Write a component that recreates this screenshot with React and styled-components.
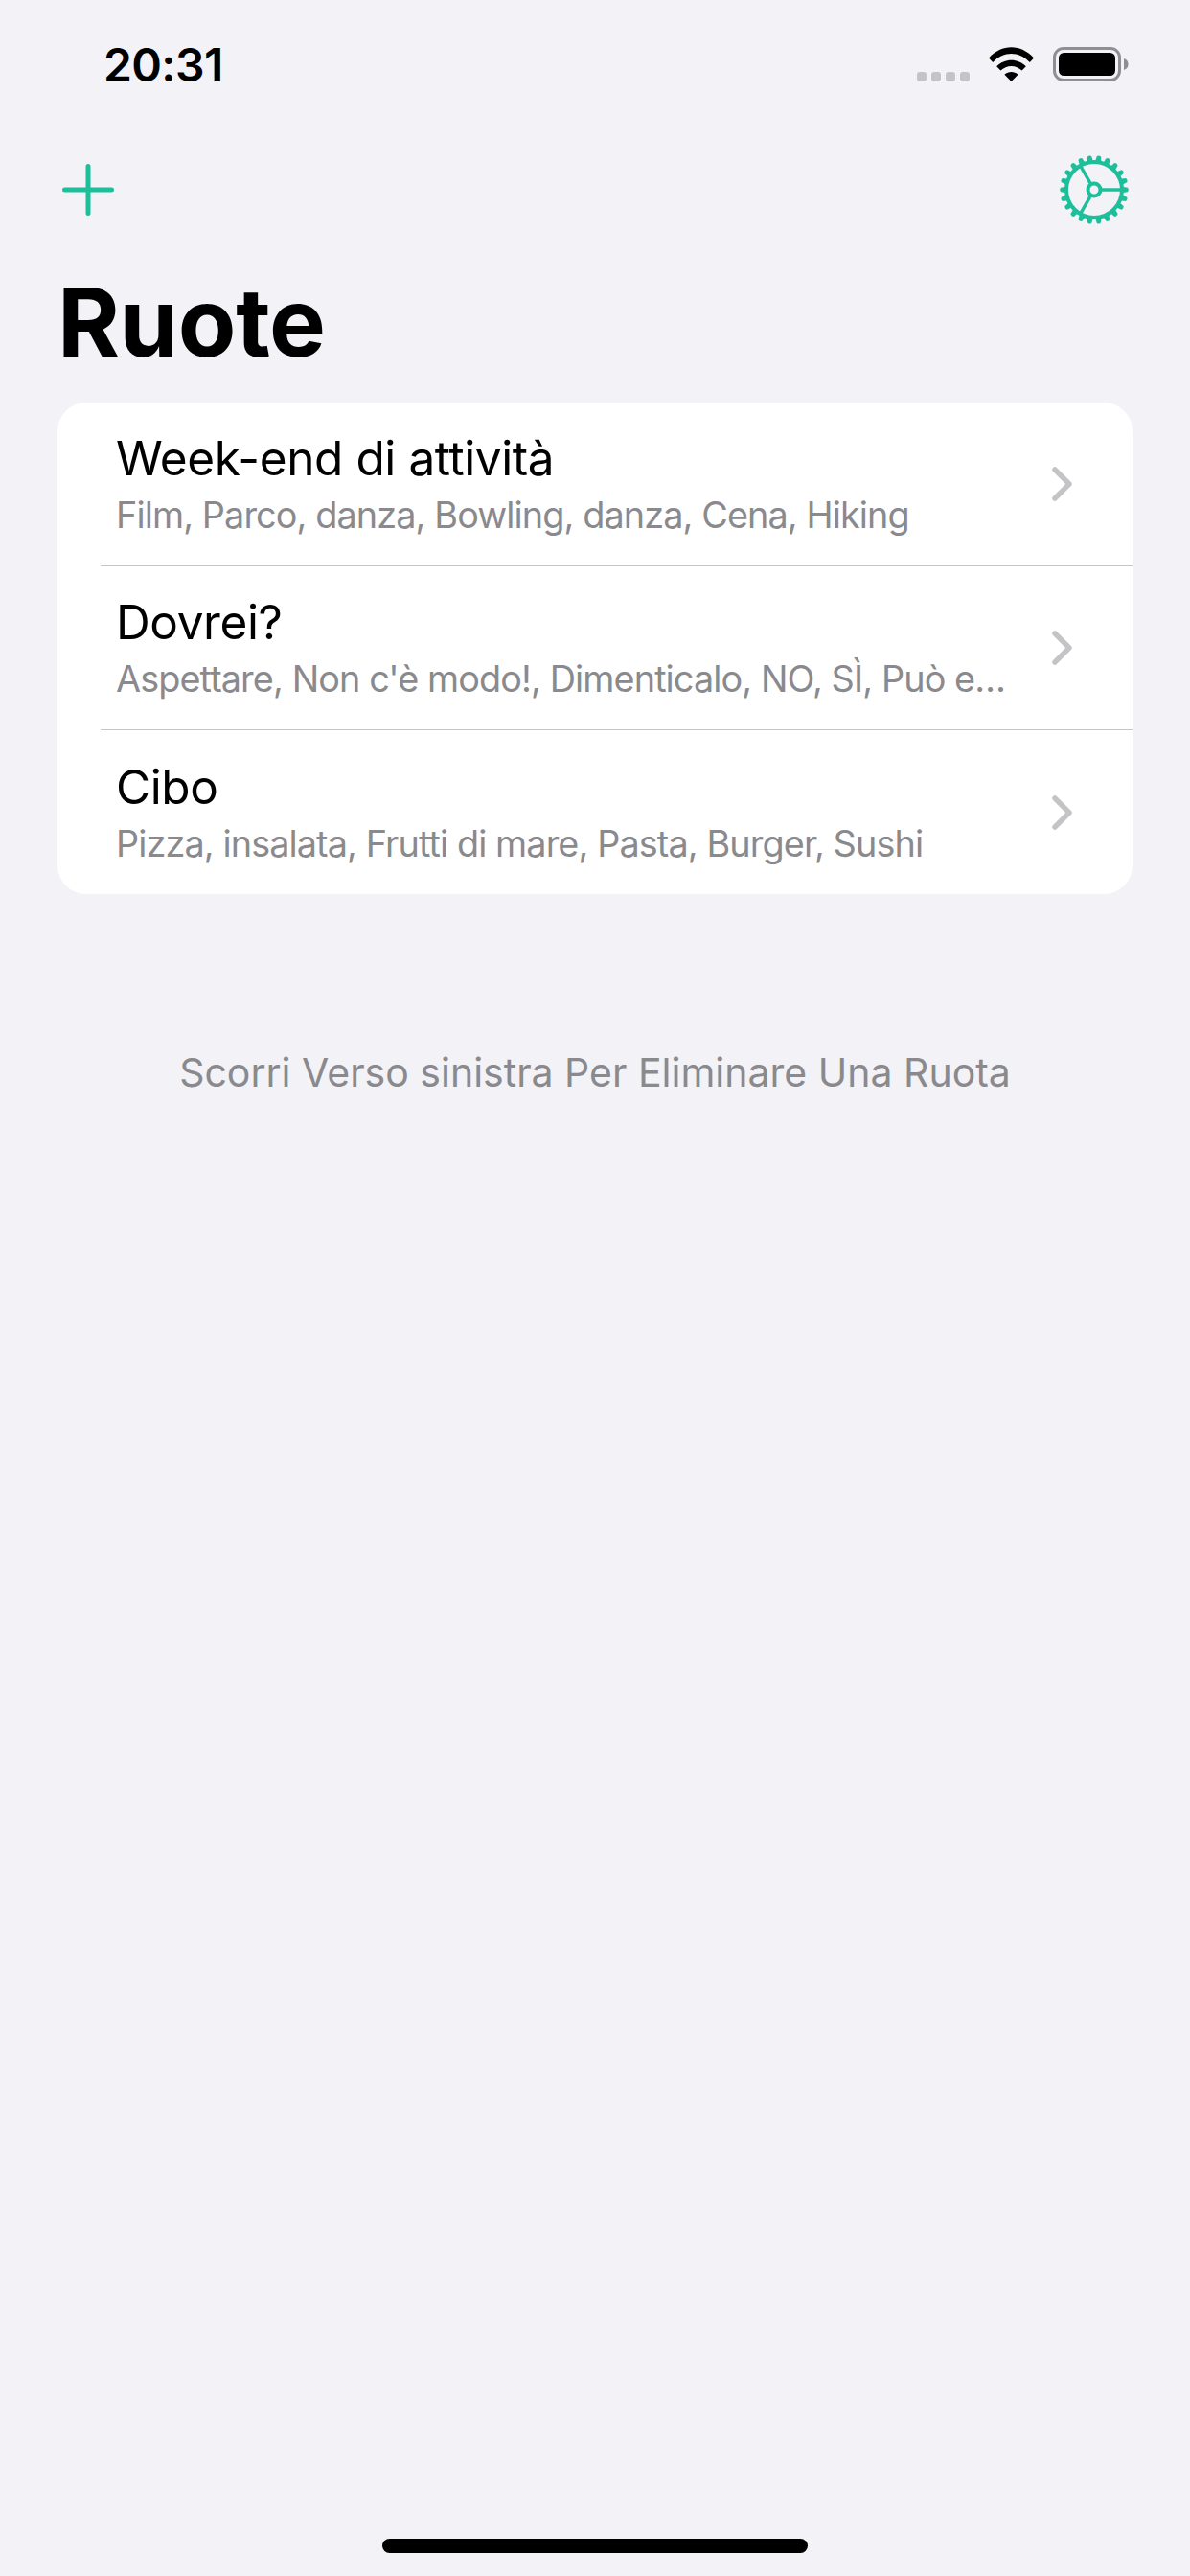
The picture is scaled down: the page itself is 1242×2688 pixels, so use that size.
import React from "react";
import styled, { createGlobalStyle } from "styled-components";

const accent = "#1dbf9b";

const GlobalStyle = createGlobalStyle`
  html, body {
    margin: 0;
    padding: 0;
    background: #f2f2f7;
  }
  * {
    box-sizing: border-box;
  }
`;

const Page = styled.div`
  width: 1242px;
  height: 2688px;
  background: #f2f2f7;
  font-family: Inter, "Liberation Sans", sans-serif;
  color: #000;
  display: flex;
  flex-direction: column;
  overflow: hidden;
`;

const StatusBar = styled.div`
  height: 136px;
  display: flex;
  align-items: flex-start;
  justify-content: space-between;
  padding: 41px 64px 0 108px;
`;

const Clock = styled.div`
  font-size: 48px;
  line-height: 53px;
  font-weight: 600;
  letter-spacing: -0.6px;
`;

const StatusIcons = styled.div`
  display: flex;
  align-items: flex-end;
  padding-top: 8px;
`;

const Signal = styled.div`
  display: flex;
  gap: 5px;
  margin-right: 20px;
`;

const SignalDot = styled.span`
  width: 10px;
  height: 10px;
  border-radius: 3px;
  background: #c4c4c8;
`;

const NavBar = styled.div`
  display: flex;
  align-items: center;
  justify-content: space-between;
  height: 124px;
  padding: 0 63px 0 65px;
`;

const Title = styled.h1`
  margin: 14px 0 0;
  padding: 0 0 0 60px;
  font-size: 99px;
  line-height: 124px;
  font-weight: 700;
  letter-spacing: -0.4px;
`;

const Card = styled.ul`
  list-style: none;
  margin: 22px 60px 0;
  padding: 0;
  background: #fff;
  border-radius: 30px;
  overflow: hidden;
`;

const Row = styled.li`
  height: 171px;
  margin-left: 45px;
  padding: 0 63px 0 16px;
  display: flex;
  align-items: center;
  border-bottom: ${(p) => (p.$last ? "none" : "1.5px solid #c6c6c8")};
`;

const RowText = styled.div`
  flex: 1;
  min-width: 0;
  margin-right: 42px;
  padding-bottom: 2px;
`;

const RowTitle = styled.div`
  font-size: 49.5px;
  line-height: 60px;
  letter-spacing: -0.4px;
  white-space: nowrap;
`;

const RowSubtitle = styled.div`
  margin-top: 6px;
  font-size: 37.8px;
  line-height: 46px;
  letter-spacing: -0.9px;
  color: #8a8a8e;
  white-space: nowrap;
  overflow: hidden;
  text-overflow: ellipsis;
`;

const Hint = styled.p`
  margin: 160px 0 0;
  text-align: center;
  font-size: 41px;
  line-height: 52px;
  color: #8a8a8e;
`;

const HomeBar = styled.div`
  width: 444px;
  height: 15px;
  border-radius: 8px;
  background: #000;
  margin: auto auto 24px;
`;

const WifiIcon = () => (
  <svg width="47" height="36" viewBox="0 0 47 36" style={{ marginRight: 20 }}>
    <path d="M0 11.5C13.5 -3.5 33.5 -3.5 47 11.5L42.8 16C31.5 4 15.5 4 4.2 16Z" fill="#000" />
    <path d="M8.2 20.2C16.5 11.5 30.5 11.5 38.8 20.2L34.6 24.6C28.5 18.3 18.5 18.3 12.4 24.6Z" fill="#000" />
    <path d="M16.4 28.8C20.5 25 26.5 25 30.6 28.8L23.5 36Z" fill="#000" />
  </svg>
);

const BatteryIcon = () => (
  <svg width="79" height="36" viewBox="0 0 79 36">
    <rect x="1.5" y="1.5" width="68" height="33" rx="9.5" fill="none" stroke="#8e8e93" strokeWidth="3" />
    <rect x="6" y="6" width="59" height="24" rx="5.5" fill="#000" />
    <path d="M74 12C77 13 78.5 15.3 78.5 18C78.5 20.7 77 23 74 24Z" fill="#8e8e93" />
  </svg>
);

const PlusIcon = () => (
  <svg width="54" height="54" viewBox="0 0 54 54">
    <path d="M27 2.5V51.5M2.5 27H51.5" fill="none" stroke={accent} strokeWidth="5" strokeLinecap="round" />
  </svg>
);

const GEAR_TEETH = 22;

const GearIcon = () => (
  <svg width="74" height="74" viewBox="-37 -37 74 74">
    {Array.from({ length: GEAR_TEETH }).map((_, i) => (
      <path
        key={i}
        d="M-3.2 -29L-2.2 -35Q0 -36.8 2.2 -35L3.2 -29Z"
        fill={accent}
        transform={`rotate(${(i * 360) / GEAR_TEETH + 90})`}
      />
    ))}
    <circle r="29" fill="none" stroke={accent} strokeWidth="4" />
    <circle r="6.5" fill="none" stroke={accent} strokeWidth="4" />
    <path
      d="M8 0H28M-4 -6.9L-14.5 -25.1M-4 6.9L-14.5 25.1"
      fill="none"
      stroke={accent}
      strokeWidth="3.4"
    />
  </svg>
);

const ChevronIcon = () => (
  <svg width="22" height="36" viewBox="0 0 22 36">
    <path d="M4 3L19 18L4 33" fill="none" stroke="#c4c4c6" strokeWidth="5.5" strokeLinecap="round" strokeLinejoin="round" />
  </svg>
);

const wheels = [
  { name: "Week-end di attività", options: "Film, Parco, danza, Bowling, danza, Cena, Hiking" },
  { name: "Dovrei?", options: "Aspettare, Non c'è modo!, Dimenticalo, NO, SÌ, Può essere" },
  { name: "Cibo", options: "Pizza, insalata, Frutti di mare, Pasta, Burger, Sushi" },
];

const App = () => (
  <Page>
    <GlobalStyle />
    <StatusBar>
      <Clock>20:31</Clock>
      <StatusIcons>
        <Signal>
          <SignalDot />
          <SignalDot />
          <SignalDot />
          <SignalDot />
        </Signal>
        <WifiIcon />
        <BatteryIcon />
      </StatusIcons>
    </StatusBar>
    <NavBar>
      <PlusIcon />
      <GearIcon />
    </NavBar>
    <Title>Ruote</Title>
    <Card>
      {wheels.map((w, i) => (
        <Row key={w.name} $last={i === wheels.length - 1}>
          <RowText>
            <RowTitle>{w.name}</RowTitle>
            <RowSubtitle>{w.options}</RowSubtitle>
          </RowText>
          <ChevronIcon />
        </Row>
      ))}
    </Card>
    <Hint>Scorri Verso sinistra Per Eliminare Una Ruota</Hint>
    <HomeBar />
  </Page>
);

export default App;
